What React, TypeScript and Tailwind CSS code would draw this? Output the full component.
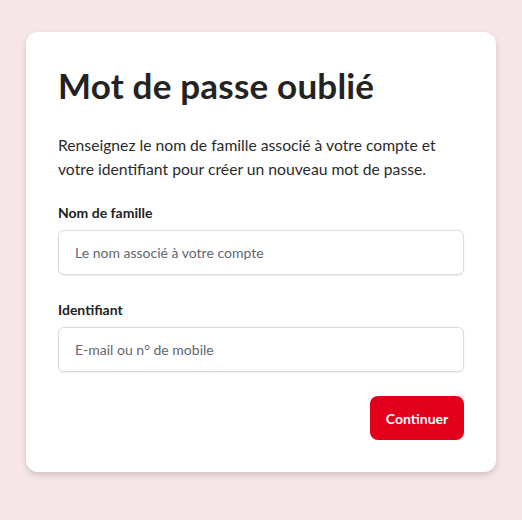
export default function App() {
  return (
    <div className="min-h-[520px] bg-[#f6e6e8] px-[26px] pt-[32px] pb-12 font-['Lato','Noto_Sans',sans-serif] text-[#222]">
      <div className="rounded-xl bg-white px-8 pt-[27px] pb-[32px] shadow-[0_3px_6px_rgba(0,0,0,0.16)]">
        <h1 className="text-[35px] leading-[52px] font-bold tracking-[0.2px] text-[#232323]">Mot de passe oublié</h1>
        <p className="mt-[22px] text-[15.7px] leading-[24px] text-[#2a2a2a]">
          Renseignez le nom de famille associé à votre compte et votre identifiant pour créer un nouveau mot de passe.
        </p>

        <form className="mt-[22px]" onSubmit={(e) => e.preventDefault()}>
          <label className="block text-[14px] leading-[20px] font-bold text-[#222]">Nom de famille</label>
          <input
            placeholder="Le nom associé à votre compte"
            className="mt-[7px] h-[45px] w-full rounded-md border border-[#d6dbe1] bg-white px-4 text-[14px] shadow-[0_1px_2px_rgba(0,0,0,0.08)] outline-none placeholder:text-[#5f6670]"
          />

          <label className="mt-[25px] block text-[14px] leading-[20px] font-bold text-[#222]">Identifiant</label>
          <input
            placeholder="E-mail ou n° de mobile"
            className="mt-[7px] h-[45px] w-full rounded-md border border-[#d6dbe1] bg-white px-4 text-[14px] shadow-[0_1px_2px_rgba(0,0,0,0.08)] outline-none placeholder:text-[#5f6670]"
          />

          <div className="mt-[24px] flex justify-end">
            <button
              type="submit"
              className="h-[44px] w-[94px] rounded-lg bg-[#e2001a] text-[14px] font-bold text-white"
            >
              Continuer
            </button>
          </div>
        </form>
      </div>
    </div>
  );
}
